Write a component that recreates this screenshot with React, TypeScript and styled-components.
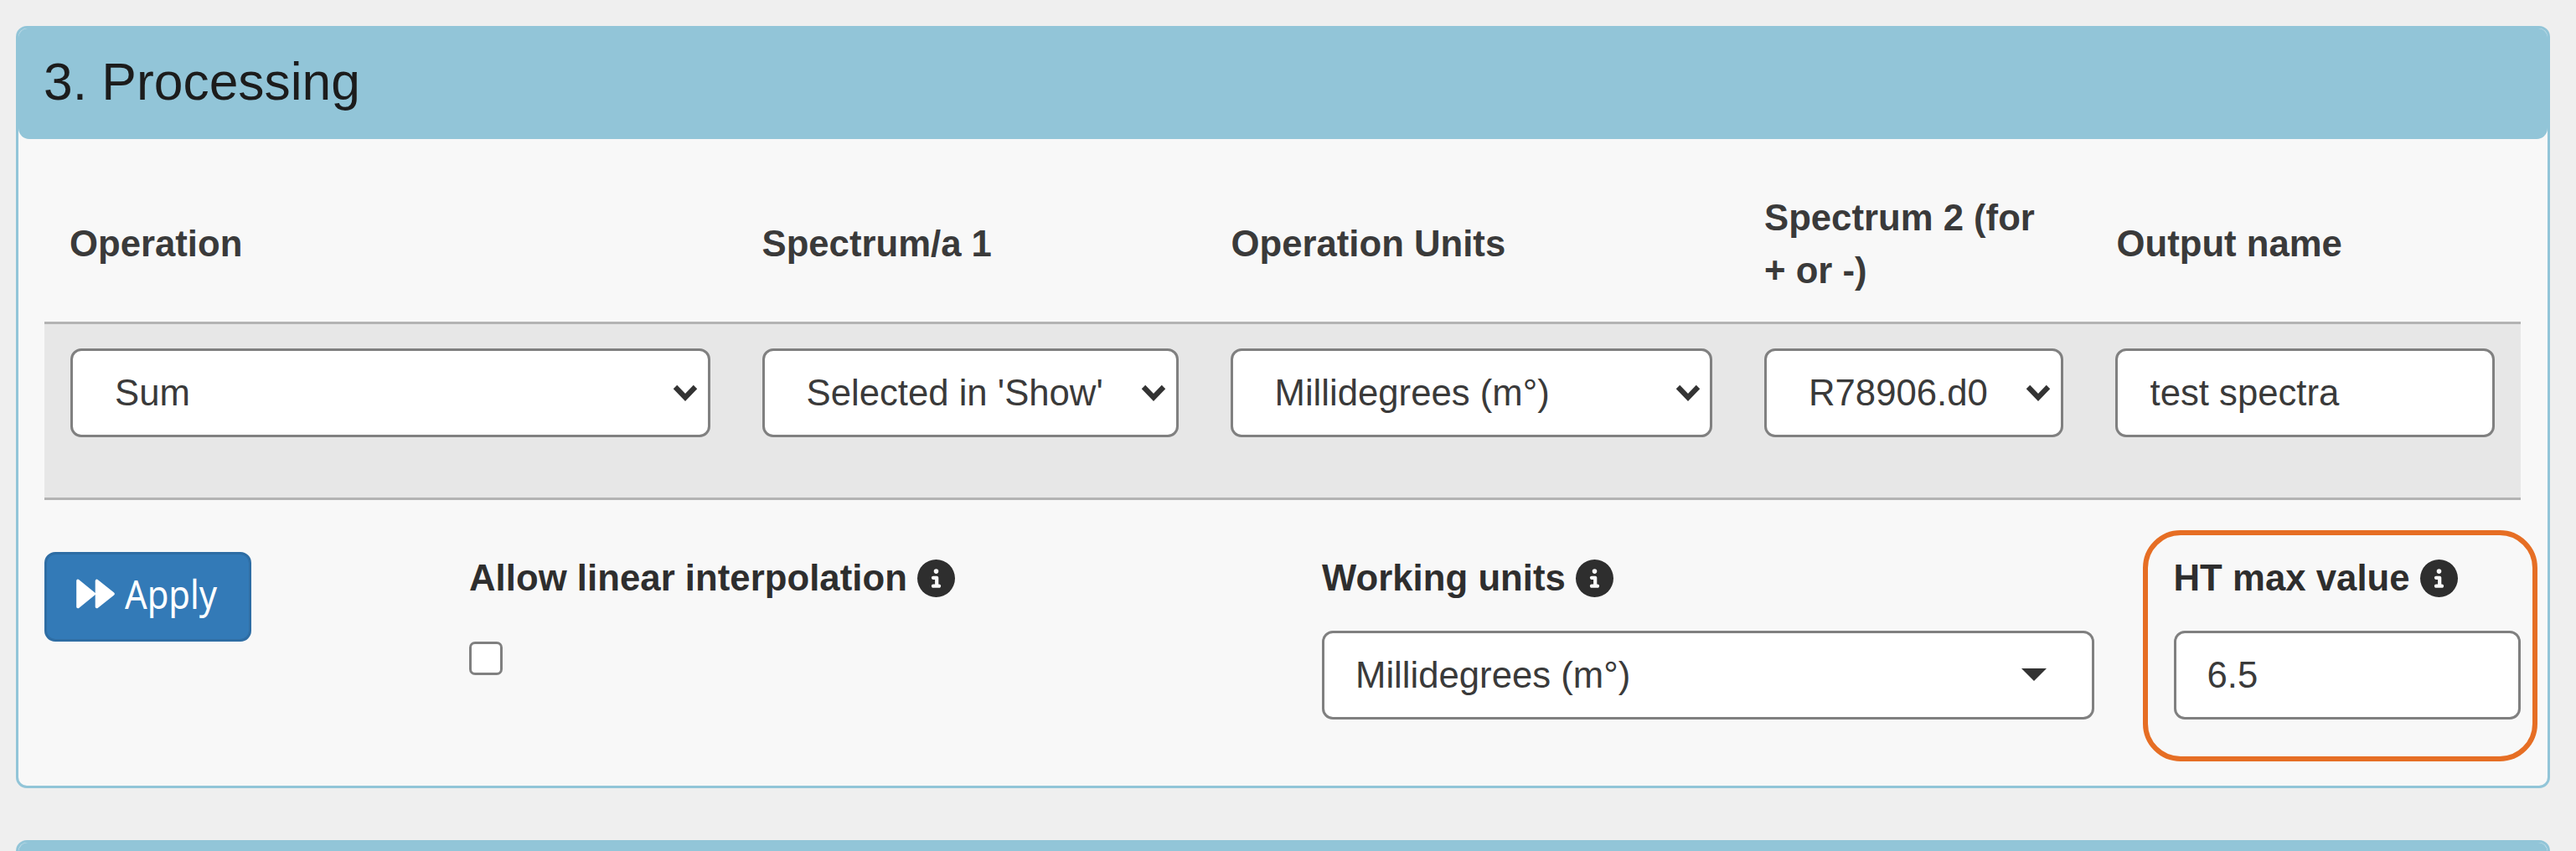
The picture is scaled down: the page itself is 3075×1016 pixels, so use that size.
import React from "react";
import styled, { createGlobalStyle } from "styled-components";
import { FaCircleInfo } from "react-icons/fa6";

const GlobalStyle = createGlobalStyle`
  *, *::before, *::after { box-sizing: border-box; }
  html, body { margin: 0; background: #efefef; }
  body {
    height: 1016px;
    overflow: hidden;
    color: #333;
    font: 43.7px/62.4px "Liberation Sans", Arial, sans-serif;
  }
`;

const Page = styled.main`
  height: 1016px;
  overflow: hidden;
  padding: 31px 31px 0 19px;
  display: flex;
  flex-direction: column;
  gap: 62px;
`;

const Panel = styled.section`
  flex: none;
  height: 910px;
  border: 3px solid #92c5d8;
  border-radius: 13px;
  background: #f8f8f8;
`;

const PanelHeading = styled.header`
  height: 132px;
  padding: 0 30px;
  display: flex;
  align-items: center;
  border-radius: 11px 11px 13px 13px;
  background: #92c5d8;
`;

const Title = styled.h3`
  margin: 0;
  padding-bottom: 4px;
  font-size: 62.4px;
  font-weight: 400;
  line-height: 68px;
  color: #1c1c1c;
`;

const PanelBody = styled.div`
  padding: 31px 32px 0 31px;
`;

const COLUMNS = "825.5px 559px 637.5px 418.5px 1fr";

const HeaderRow = styled.div`
  display: grid;
  grid-template-columns: ${COLUMNS};
  align-items: center;
  height: 187px;
  padding-top: 2px;
`;

const HeaderCell = styled.div<{ $shift?: number }>`
  padding: 0 ${(p) => 31 - (p.$shift ?? 0)}px 0 ${(p) => 31 + (p.$shift ?? 0)}px;
  font-weight: 700;
  color: #3a3a3a;
`;

const ControlRow = styled.div`
  display: grid;
  grid-template-columns: ${COLUMNS};
  align-items: start;
  height: 213px;
  padding-top: 29px;
  border-top: 3px solid #b3b3b3;
  border-bottom: 3px solid #b3b3b3;
  background: #e7e7e7;
`;

const Cell = styled.div`
  padding: 0 31px;
`;

const SelectBox = styled.div<{ $start: number; $end: number }>`
  height: 106px;
  padding: 0 ${(p) => p.$end}px 0 ${(p) => p.$start}px;
  display: flex;
  align-items: center;
  justify-content: space-between;
  border: 3px solid #808080;
  border-radius: 13px;
  background: #fff;
  color: #3a3a3a;
  white-space: nowrap;
`;

const TextInput = styled.input<{ $start?: number }>`
  display: block;
  width: 100%;
  height: 106px;
  padding: 0 20px 0 ${(p) => p.$start ?? 37}px;
  border: 3px solid #808080;
  border-radius: 13px;
  background: #fff;
  color: #3a3a3a;
  font: inherit;
`;

const Chevron = styled.svg`
  flex: none;
  width: 30px;
  height: 21px;
  margin-bottom: 1px;
`;

const Caret = styled.span`
  width: 0;
  height: 0;
  border: 15.6px solid transparent;
  border-top-color: #333;
  border-bottom-width: 0;
  margin-bottom: 2px;
`;

const ActionRow = styled.div`
  display: grid;
  grid-template-columns: 507px 1018px 1016.5px 1fr;
  align-items: start;
  padding-top: 62px;
`;

const ApplyButton = styled.button`
  width: 247px;
  height: 107px;
  padding: 0 0 0 35px;
  display: flex;
  align-items: center;
  gap: 12px;
  border: 3px solid #2e6da4;
  border-radius: 13px;
  background: #337ab7;
  color: #fff;
`;

const ForwardIcon = styled.svg`
  flex: none;
  width: 46px;
  height: 36px;
  margin-bottom: 8px;
`;

const ApplyText = styled.span`
  font: 400 48px/62px "Noto Sans", sans-serif;
  transform: scaleX(0.87);
  transform-origin: left center;
  margin-bottom: 7px;
`;

const Field = styled.div<{ $width?: number }>`
  width: ${(p) => (p.$width ? `${p.$width}px` : "auto")};
  position: relative;
`;

const Label = styled.label`
  display: flex;
  align-items: center;
  gap: 12px;
  height: 62px;
  padding-top: 1px;
  margin-bottom: 32px;
  font-weight: 700;
  letter-spacing: 0.04px;
  white-space: nowrap;
  color: #2e2e2e;

  svg {
    width: 45px;
    height: 45px;
  }
`;

const Checkbox = styled.input`
  appearance: none;
  display: block;
  width: 40px;
  height: 40px;
  margin: 45px 0 0;
  border: 3px solid #808080;
  border-radius: 7px;
  background: #fff;
`;

const Highlight = styled.div`
  position: absolute;
  left: -37px;
  top: -26px;
  width: 471px;
  height: 276px;
  border: 6px solid #e66e24;
  border-radius: 45px;
  pointer-events: none;
`;

const SelectArrow = () => (
  <Chevron viewBox="0 0 30 21">
    <path d="M3 4 15 16.500 27 4" fill="none" stroke="#333" strokeWidth="6.2" />
  </Chevron>
);

const NativeSelect = ({ value }: { value: string }) => (
  <SelectBox $start={50} $end={11.5}>
    <span>{value}</span>
    <SelectArrow />
  </SelectBox>
);

const headers = [
  { text: "Operation", shift: -1 },
  { text: "Spectrum/a 1", shift: 0 },
  { text: "Operation Units", shift: 1 },
  { text: "Spectrum 2 (for + or -)", shift: 0 },
  { text: "Output name", shift: 2 },
];
const selections = ["Sum", "Selected in 'Show'", "Millidegrees (m°)", "R78906.d0"];

export default function App() {
  return (
    <>
      <GlobalStyle />
      <Page>
        <Panel>
          <PanelHeading>
            <Title>3. Processing</Title>
          </PanelHeading>
          <PanelBody>
            <HeaderRow>
              {headers.map(({ text, shift }) => (
                <HeaderCell key={text} $shift={shift}>
                  {text}
                </HeaderCell>
              ))}
            </HeaderRow>
            <ControlRow>
              {selections.map((value) => (
                <Cell key={value}>
                  <NativeSelect value={value} />
                </Cell>
              ))}
              <Cell>
                <TextInput $start={39} defaultValue="test spectra" />
              </Cell>
            </ControlRow>
            <ActionRow>
              <ApplyButton type="button">
                <ForwardIcon viewBox="0 0 46 36">
                  <path
                    d="M2 2.500V33.500L21 18ZM24.500 2.500V33.500L44 18Z"
                    fill="#fff"
                    stroke="#fff"
                    strokeWidth="3.600"
                    strokeLinejoin="round"
                  />
                </ForwardIcon>
                <ApplyText>Apply</ApplyText>
              </ApplyButton>
              <Field>
                <Label>
                  Allow linear interpolation <FaCircleInfo />
                </Label>
                <Checkbox type="checkbox" />
              </Field>
              <Field $width={922}>
                <Label>
                  Working units <FaCircleInfo />
                </Label>
                <SelectBox $start={37} $end={54}>
                  <span>Millidegrees (m°)</span>
                  <Caret />
                </SelectBox>
              </Field>
              <Field>
                <Label>
                  HT max value <FaCircleInfo />
                </Label>
                <TextInput defaultValue="6.5" />
                <Highlight />
              </Field>
            </ActionRow>
          </PanelBody>
        </Panel>
        <Panel>
          <PanelHeading />
        </Panel>
      </Page>
    </>
  );
}
